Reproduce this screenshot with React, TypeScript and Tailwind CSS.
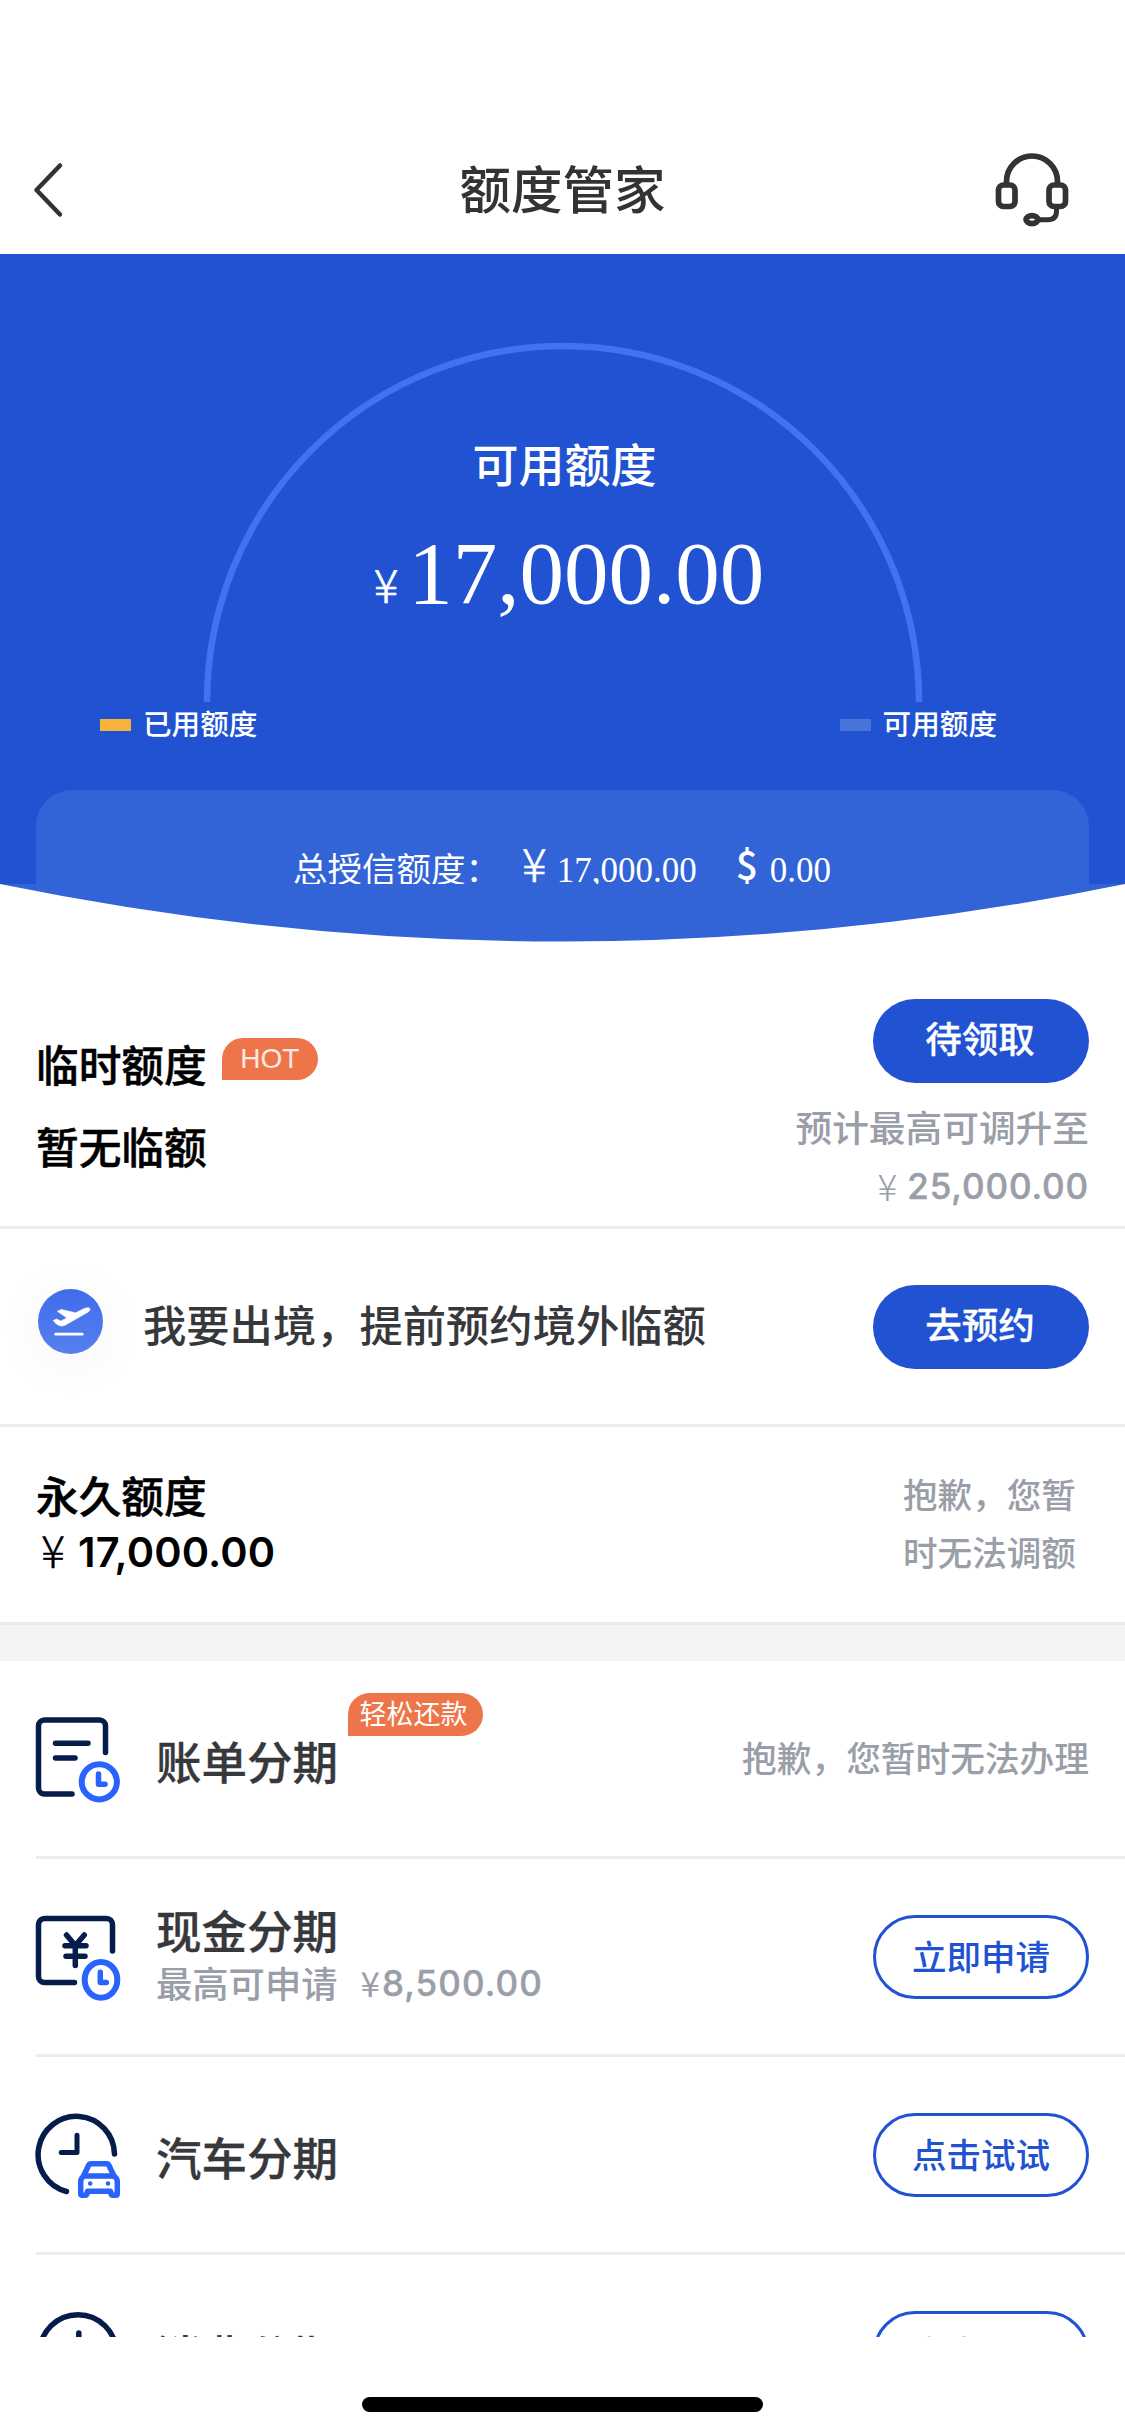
import type { ReactNode } from 'react';

type InstallmentRow = {
  title: string;
  icon: ReactNode;
  tag?: string;
  subLabel?: string;
  subAmount?: string;
  action?: string;
  notice?: string;
};

const BackIcon = () => (
  <svg width="32" height="60" viewBox="0 0 32 60" fill="none" stroke="#333" strokeWidth="4.500" strokeLinecap="round" strokeLinejoin="round">
    <path d="M28 5.500 4.500 30 28 54.500" />
  </svg>
);

const HeadsetIcon = () => (
  <svg width="84" height="90" viewBox="0 0 84 90" fill="none" stroke="#333" strokeWidth="5.700">
    <path d="M16.500 39V36.500a25.500 25.500 0 0 1 51 0V39" />
    <rect x="8.500" y="40" width="16.500" height="21.500" rx="5" />
    <rect x="59" y="40" width="16.500" height="21.500" rx="5" />
    <path d="M66.500 62v4c0 6-3 8.800-9 8.800h-9" strokeWidth="5" />
    <ellipse cx="42" cy="74.600" rx="6" ry="4" />
  </svg>
);

const PlaneIcon = () => (
  <svg width="65" height="65" viewBox="0 0 64 64">
    <defs>
      <linearGradient id="plane-bg" x1="0" y1="0" x2="0" y2="1">
        <stop offset="0" stopColor="#3f6dea" />
        <stop offset="1" stopColor="#5680ee" />
      </linearGradient>
    </defs>
    <circle cx="32" cy="32" r="32" fill="url(#plane-bg)" />
    <path
      d="M15 31l3.200-1.500 4.300 2 6-3-9.500-6.500 4-1.800 14 3.300 8-4c2.500-1.200 5.300-1.500 6-.3.800 1.500-.5 2.800-2 3.600L27 35.500c-2 1-4.500 1.300-6 .5-2.500-1-4.500-3-6-5z"
      fill="#fff"
      stroke="#fff"
      strokeWidth="0.600"
    />
    <path d="M17.500 44.500h26" stroke="#fff" strokeWidth="2.800" strokeLinecap="round" />
  </svg>
);

const BillIcon = () => (
  <svg width="88" height="88" viewBox="0 0 88 88" fill="none" strokeLinecap="round" strokeLinejoin="round">
    <g stroke="#061c4b" strokeWidth="5.500">
      <path d="M71.500 36.500V10a6 6 0 0 0-6-6h-55a6 6 0 0 0-6 6v62a6 6 0 0 0 6 6H38" />
      <path d="M21.500 27.300h32.500M21.500 42H41" />
    </g>
    <g stroke="#2963fc" strokeWidth="6">
      <circle cx="65.300" cy="65.800" r="17.600" />
      <path d="M64.500 58v10.300h6.500" strokeWidth="5.500" />
    </g>
  </svg>
);

const CashIcon = () => (
  <svg width="88" height="88" viewBox="0 0 88 88" fill="none" strokeLinecap="round" strokeLinejoin="round">
    <g stroke="#061c4b" strokeWidth="5.500">
      <path d="M78.500 37V10.500a6 6 0 0 0-6-6h-62a6 6 0 0 0-6 6v52a6 6 0 0 0 6 6H40.500" />
      <path d="M32.500 21 41.300 31.500l9-10.500M31 31.800h21M32 42.200h19M41.300 31.500v20" />
    </g>
    <g stroke="#2963fc" strokeWidth="6">
      <ellipse cx="67" cy="65.800" rx="16.300" ry="17.900" />
      <path d="M66.300 58.300v10.200h6" strokeWidth="5.500" />
    </g>
  </svg>
);

const CarIcon = () => (
  <svg width="88" height="88" viewBox="0 0 88 88" fill="none" strokeLinecap="round" strokeLinejoin="round">
    <g stroke="#061c4b" strokeWidth="5.500">
      <path d="M80.500 42A38.200 38.200 0 1 0 32.500 79.500" />
      <path d="M43 23.300v17.300H27.200" strokeWidth="5" />
    </g>
    <g transform="translate(0 1)" stroke="#2963fc" strokeWidth="5.500">
      <path d="M49.500 63l5-10.500c.6-1.200 1.300-1.700 2.500-1.700h15.500c1.200 0 2 .5 2.500 1.700l5 10.500" />
      <path d="M52 63h26c3.500 0 5.300 2.500 5.300 6v11.800c0 1-.6 1.500-1.500 1.500h-3c-1.200 0-1.600-.6-1.800-1.800l-.5-2.200H53.500l-.5 2.200c-.2 1.200-.8 1.800-1.800 1.800h-3c-.9 0-1.500-.5-1.500-1.500V69c0-3.500 1.800-6 5.300-6z" />
      <path d="M56.200 70.500h.01M74 70.500h.01" strokeWidth="4.500" />
    </g>
  </svg>
);

const ClockIcon = () => (
  <svg width="88" height="88" viewBox="0 0 88 88" fill="none" stroke="#061c4b" strokeWidth="5.500" strokeLinecap="round">
    <circle cx="44" cy="43" r="38.300" />
    <path d="M44.800 23v18" />
  </svg>
);

const rows: InstallmentRow[] = [
  { title: '账单分期', icon: <BillIcon />, tag: '轻松还款', notice: '抱歉，您暂时无法办理' },
  { title: '现金分期', icon: <CashIcon />, subLabel: '最高可申请', subAmount: '8,500.00', action: '立即申请' },
  { title: '汽车分期', icon: <CarIcon />, action: '点击试试' },
  { title: '消费分期', icon: <ClockIcon />, action: '点击试试' },
];

const SolidButton = ({ children }: { children: ReactNode }) => (
  <button className="h-[84px] w-[216px] shrink-0 rounded-full bg-[#2052d2] pr-[7px] pb-[6px] text-[36.500px] leading-none font-medium text-white [-webkit-text-stroke:0.3px]">
    {children}
  </button>
);

const Installment = ({ row }: { row: InstallmentRow }) => (
  <div className="ml-[36px] flex h-[198px] shrink-0 items-start border-b-[3px] border-[#ededed] pr-[36px]">
    <div className="-ml-[2px] mt-[55px] w-[122px] shrink-0">{row.icon}</div>
    <div className={row.subLabel ? 'mt-[43px]' : 'mt-[72px]'}>
      <div className="text-[45.500px] leading-[55px] font-medium text-[#37383c] [-webkit-text-stroke:0.3px]">{row.title}</div>
      {row.subLabel && (
        <div className="flex text-[36.300px] leading-[50px] text-[#999ea8]">
          <span className="font-medium">{row.subLabel}</span>
          <span className="ml-[23px] text-[35px] font-normal">¥</span>
          <span className="ml-[2px] mt-px font-[Inter] text-[35px] font-medium tracking-[1.1px] [-webkit-text-stroke:0.4px]">{row.subAmount}</span>
        </div>
      )}
    </div>
    {row.tag && (
      <div className="ml-[10px] mt-[32px] h-[43px] w-[135px] rounded-[22px] rounded-bl-none bg-[#ee7449] pr-[4px] text-center text-[27px] leading-[40px] text-white">
        {row.tag}
      </div>
    )}
    {row.notice && (
      <div className="ml-auto mt-[70px] text-[34.700px] leading-[52px] font-medium text-[#999ea8]">{row.notice}</div>
    )}
    {row.action && (
      <button className="ml-auto mt-[56px] h-[84px] w-[216px] rounded-full border-[3px] border-[#2052d2] pb-[4px] text-[34.500px] leading-none font-medium text-[#2052d2]">
        {row.action}
      </button>
    )}
  </div>
);

const App = () => (
  <div className="flex h-[2435px] w-[1125px] flex-col overflow-hidden bg-white font-['Noto_Sans_CJK_SC',sans-serif]">
    <header className="grid h-[254px] shrink-0 grid-cols-[200px_1fr_200px] items-start pt-[145px]">
      <div className="pl-[32px] pt-[15px]">
        <BackIcon />
      </div>
      <h1 className="pt-[10px] text-center text-[51.500px] leading-[64px] font-medium text-[#333]">额度管家</h1>
      <div className="pl-[65px]">
        <HeadsetIcon />
      </div>
    </header>

    {/* Available limit gauge */}
    <section className="flex h-[630px] shrink-0 flex-col bg-[#2052d2] pt-[88px] text-white">
      <div className="grid h-[360px] justify-center pl-px">
        <svg className="col-start-1 row-start-1" width="720" height="360" viewBox="0 0 720 360" fill="none">
          <path d="M4 360a356 356 0 0 1 712 0" stroke="#4171f4" strokeWidth="6.600" />
        </svg>
        <div className="col-start-1 row-start-1 flex flex-col items-center pt-[90px]">
          <div className="pl-[3px] text-[46px] leading-[60px] font-medium">可用额度</div>
          <div className="mt-[31px] flex items-baseline pl-[12px] leading-[100px]">
            <span className="text-[46px] font-light [-webkit-text-stroke:0.6px]">¥</span>
            <span className="ml-[10px] font-['Liberation_Serif'] text-[89px]">17,000.00</span>
          </div>
        </div>
      </div>
      <div className="flex h-[44px] items-center justify-between pl-[100px] pr-[128px] text-[28.600px] leading-[44px] font-medium">
        <div className="flex items-center gap-[12px]">
          <span className="mt-[2px] h-[12px] w-[31px] bg-[#f6b33c]" />
          <span className="-mt-[3px]">已用额度</span>
        </div>
        <div className="flex items-center gap-[12px]">
          <span className="mt-[2px] h-[12px] w-[31px] bg-[#4775da]" />
          <span className="-mt-[3px]">可用额度</span>
        </div>
      </div>
      <div className="mx-[36px] mt-auto flex h-[94px] items-baseline overflow-hidden rounded-t-[36px] bg-[#3263d7] pl-[257px] pt-[41px] leading-[72px]">
        <span className="text-[34.500px]">总授信额度：</span>
        {/* currency signs sit slightly above the amounts */}
        <span className="-mt-[6px] ml-[22px] self-start text-[46px] leading-[74px] font-light [-webkit-text-stroke:0.6px]">¥</span>
        <span className="ml-[10px] font-['Liberation_Serif'] text-[35px]">17,000.00</span>
        <span className="-mt-[5px] ml-[39px] self-start text-[39px] leading-[74px] font-medium">$</span>
        <span className="ml-[12px] font-['Liberation_Serif'] text-[35px]">0.00</span>
      </div>
    </section>
    <svg className="block shrink-0" width="1125" height="58" viewBox="0 0 1125 58">
      <path d="M0 0Q562.500 115 1125 0z" fill="#3263d7" />
    </svg>

    {/* Temporary limit */}
    <section className="flex h-[287px] shrink-0 justify-between border-b-[3px] border-[#ededed] pl-[36px] pr-[36px]">
      <div className="pt-[80px] text-[42.700px] leading-[82px] font-medium text-black [-webkit-text-stroke:0.5px]">
        <div className="flex">
          临时额度
          <span className="ml-[15px] mt-[16px] h-[42px] w-[96px] rounded-[21px] rounded-bl-none bg-[#ee7449] text-center font-['Liberation_Sans'] text-[28px] leading-[41px] font-normal text-white/85 [-webkit-text-stroke:0]">
            HOT
          </span>
        </div>
        <div>暂无临额</div>
      </div>
      <div className="flex flex-col items-end pt-[57px] font-medium text-[#999ea8]">
        <div className="flex">
          <SolidButton><span className="pl-[5px]">待领取</span></SolidButton>
        </div>
        <div className="mt-[14px] text-[36.700px] leading-[58px]">预计最高可调升至</div>
        <div className="flex pt-[2px] text-[35px] leading-[58px]">
          <span className="-mt-px text-[37px] font-light">¥</span>
          <span className="ml-[10px] font-[Inter] font-medium tracking-[0.9px] [-webkit-text-stroke:0.5px]">25,000.00</span>
        </div>
      </div>
    </section>

    <section className="flex h-[198px] shrink-0 items-start border-b-[3px] border-[#ededed] pl-[38px] pr-[36px]">
      <div className="mt-[60px] rounded-full shadow-[0_8px_56px_rgba(0,0,0,0.05)]">
        <PlaneIcon />
      </div>
      <div className="ml-[40px] mt-[62px] text-[43.300px] leading-[64px] font-medium text-[#37383c]">
        我要出境，提前预约境外临额
      </div>
      <div className="ml-auto mt-[56px]">
        <SolidButton><span className="pl-[5px]">去预约</span></SolidButton>
      </div>
    </section>

    {/* Permanent limit */}
    <section className="flex h-[198px] shrink-0 items-start justify-between border-b-[3px] border-[#ebebeb] pl-[36px] pr-[48px]">
      <div className="pt-[37px] font-medium text-black">
        <div className="text-[42.700px] leading-[60px] [-webkit-text-stroke:0.5px]">永久额度</div>
        <div className="flex pt-px text-[41.500px] leading-[54px]">
          <span className="-mt-[3px] ml-[5px] text-[45px] font-light [-webkit-text-stroke:0.4px]">¥</span>
          <span className="ml-[13px] font-[Inter] font-semibold tracking-[0.1px]">17,000.00</span>
        </div>
      </div>
      <div className="w-[174px] pt-[37px] text-[34.600px] leading-[58px] font-medium text-[#999ea8]">抱歉，您暂时无法调额</div>
    </section>
    <div className="h-[36px] shrink-0 bg-[#f2f4f6]" />

    <section className="h-[676px] shrink-0 overflow-hidden">
      {rows.map((row) => (
        <Installment key={row.title} row={row} />
      ))}
    </section>

    <div className="mx-auto mt-[60px] h-[15px] w-[401px] shrink-0 rounded-full bg-black" />
  </div>
);

export default App;
